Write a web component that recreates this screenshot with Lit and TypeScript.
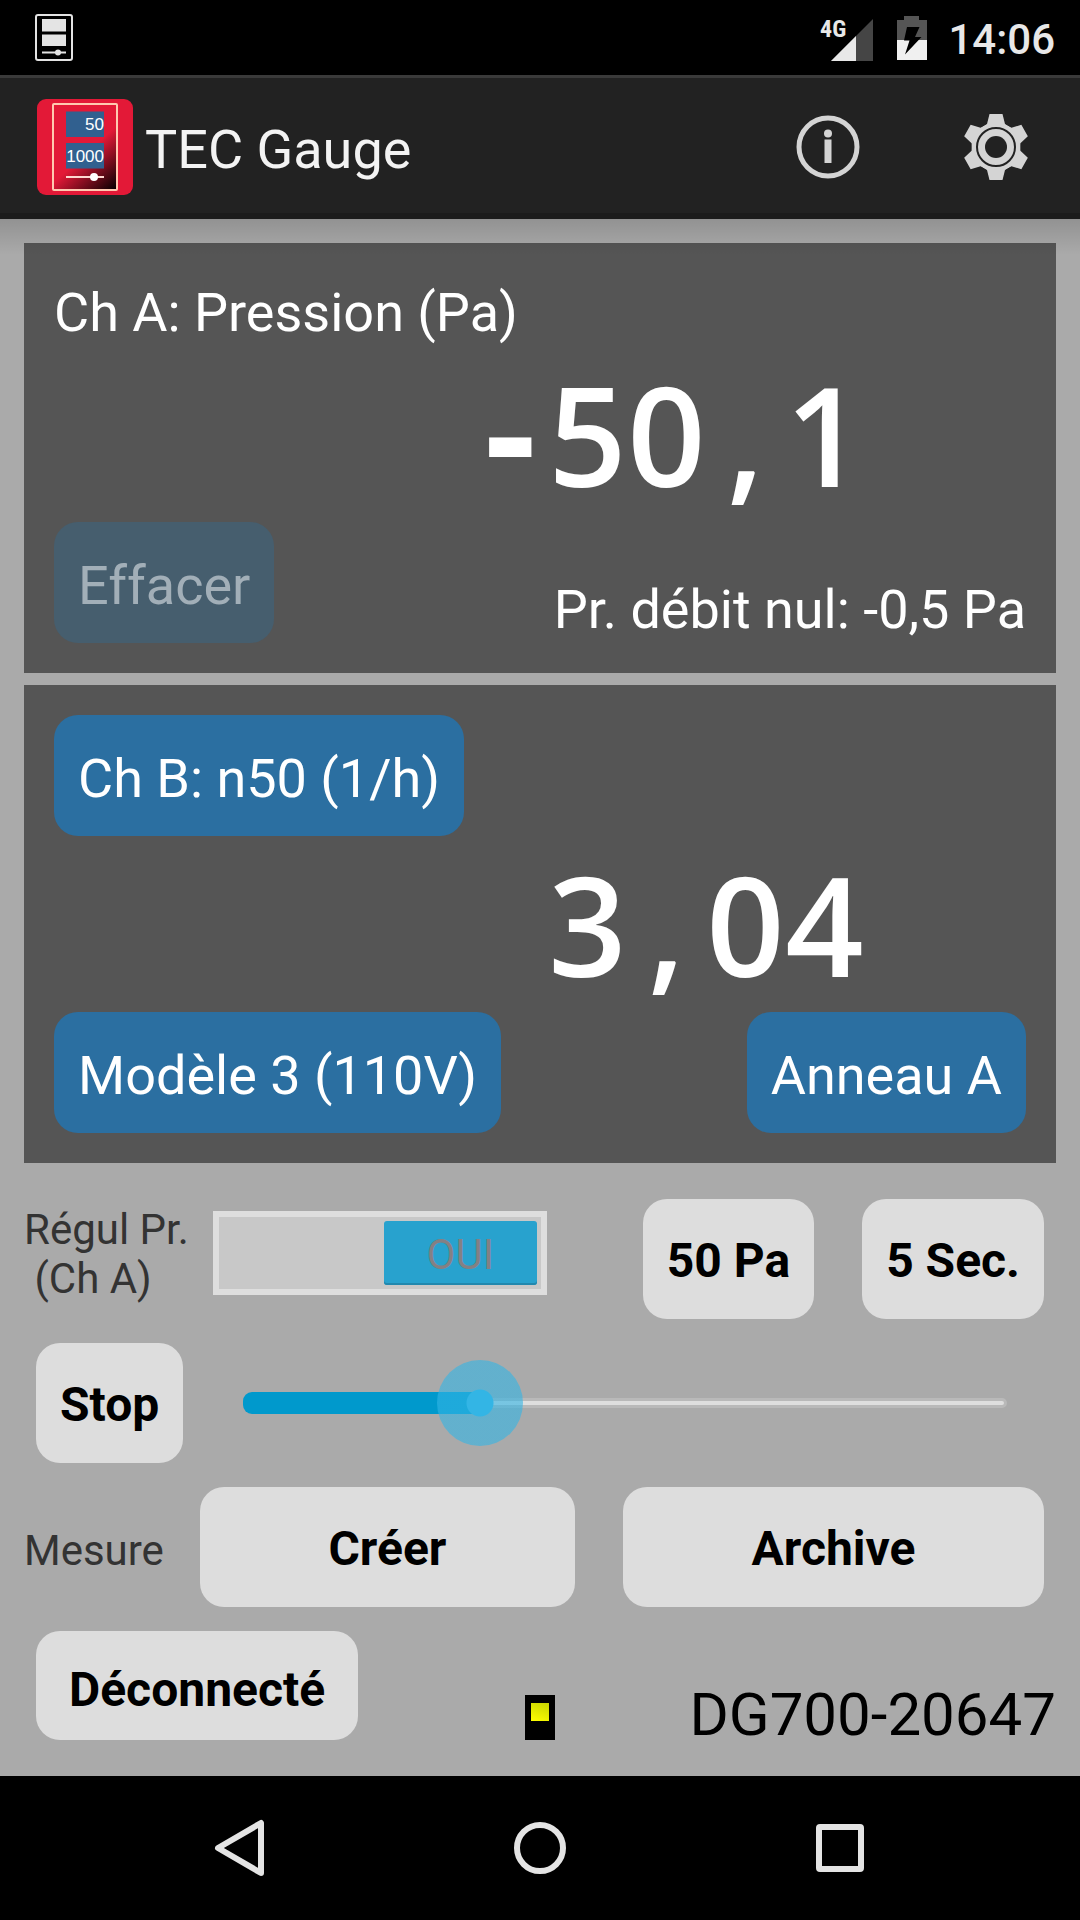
import { LitElement, html, css, svg } from "lit";
import { customElement, property, state } from "lit/decorators.js";

const toothAngles = [0, 60, 120, 180, 240, 300];

@customElement("gauge-readout")
class GaugeReadout extends LitElement {
  @property() value = "";

  static styles = css`
    :host {
      display: flex;
      justify-content: flex-end;
      padding-right: 162px;
      color: #fff;
      font: 600 137px/140px "Open Sans", "Noto Sans", sans-serif;
    }
    .cell {
      width: 79px;
      text-align: center;
    }
    .sign {
      font-family: "DejaVu Sans Mono", monospace;
      font-weight: 700;
      line-height: 0;
    }
  `;

  render() {
    return html`${[...this.value].map(
      (c) => html`<span class="cell">${c === "-" ? html`<span class="sign">-</span>` : c}</span>`
    )}`;
  }
}

@customElement("app-root")
class AppRoot extends LitElement {
  @state() private level = 31;
  @state() private regulating = true;

  static styles = css`
    :host {
      display: flex;
      flex-direction: column;
      min-height: 100vh;
      background: #aaa;
      color: #000;
      font-family: Roboto, sans-serif;
    }
    * {
      box-sizing: border-box;
    }
    svg {
      display: block;
      flex: none;
    }
    button {
      margin: 0;
      border: 0;
      font-family: inherit;
      cursor: pointer;
    }

    .status {
      display: flex;
      align-items: center;
      height: 75px;
      padding: 0 25px 0 35px;
      background: #000;
      color: #e8e8e8;
    }
    .signal {
      margin-left: auto;
    }
    .network {
      font: 700 24px "Liberation Sans Narrow", "Roboto Condensed", Roboto, sans-serif;
    }
    .battery {
      margin-left: 24px;
    }
    .clock {
      margin-left: 21px;
      padding-top: 4px;
      font-size: 42px;
      font-weight: 500;
      line-height: 48px;
    }

    .bar {
      position: relative;
      z-index: 1;
      display: flex;
      align-items: center;
      height: 144px;
      padding: 2px 48px 0 37px;
      border-top: 3px solid #3a3a3a;
      border-bottom: 6px solid #1c1c1c;
      background: #222;
      color: #f3f3f3;
    }
    .bar::after {
      content: "";
      position: absolute;
      left: 0;
      right: 0;
      top: 141px;
      height: 36px;
      background: linear-gradient(rgba(0, 0, 0, 0.14), rgba(0, 0, 0, 0));
      pointer-events: none;
    }
    .name {
      margin: 0 auto 0 12px;
      padding-top: 6px;
      font-size: 54px;
      font-weight: 400;
      line-height: 64px;
    }
    .action {
      padding: 0;
      background: none;
    }
    .action + .action {
      margin-left: 92px;
    }

    main {
      flex: 1;
      display: flex;
      flex-direction: column;
      gap: 24px;
      padding: 24px 24px 36px;
    }
    .panels {
      display: flex;
      flex-direction: column;
      gap: 12px;
      margin-bottom: 12px;
    }
    .panel {
      padding: 30px;
      background: #555;
      color: #fff;
      font-size: 54px;
      line-height: 64px;
    }
    .title {
      margin: 0 0 11px;
      font-size: 54px;
      font-weight: 400;
      line-height: 80px;
    }
    .pick {
      padding: 32px 24px 25px;
      border-radius: 24px;
      background: #2b6fa1;
      color: #fff;
      font-size: 54px;
      line-height: 64px;
    }
    .pick:disabled {
      background: #465e6e;
      color: #a2afb8;
    }
    .pick.head {
      display: block;
      margin-bottom: 18px;
    }
    .foot {
      display: flex;
      justify-content: space-between;
      align-items: flex-end;
      margin-top: 18px;
    }
    .zero {
      line-height: 66px;
    }

    .row {
      display: flex;
      align-items: flex-start;
      padding: 0 12px 0 0;
    }
    .label {
      color: #333;
      font-size: 42px;
      line-height: 49px;
    }
    .regul {
      padding-top: 6px;
      white-space: pre;
    }
    .mesure {
      align-self: center;
      padding-top: 6px;
    }
    .key {
      padding: 34px 24px 30px;
      border-radius: 24px;
      background: #ddd;
      color: #000;
      font-size: 48px;
      font-weight: 700;
      line-height: 56px;
    }
    .key + .key {
      margin-left: 48px;
    }
    .push {
      margin-left: auto;
    }
    .indent {
      margin-left: 12px;
    }
    .grow {
      flex: 1 1 auto;
    }
    .mesure + .grow {
      margin-left: 36px;
    }
    .key.low {
      justify-self: start;
      padding: 31px 33px 22px;
    }

    .switch {
      display: flex;
      justify-content: flex-end;
      width: 334px;
      height: 84px;
      margin: 12px 0 0 24px;
      padding: 4px;
      border: 6px solid #dedede;
      background: #c8c8c8;
    }
    .switch.off {
      justify-content: flex-start;
    }
    .thumb {
      width: 153px;
      height: 64px;
      border-radius: 3px;
      background: #28a2ce;
      box-shadow: inset 0 -2px #2288ae;
      color: #848084;
      font-size: 42px;
      line-height: 68px;
      text-align: center;
    }

    .seek {
      position: relative;
      flex: 1;
      display: flex;
      align-items: center;
      height: 120px;
      margin-left: 60px;
      padding: 0 37px 0 0;
    }
    .rail {
      position: relative;
      flex: 1;
      height: 10px;
      border: 3px solid #b9b9b9;
      border-radius: 5px;
      background: #dedede;
    }
    .fill {
      position: absolute;
      left: -3px;
      top: -9px;
      height: 22px;
      border-radius: 9px 0 0 9px;
      background: #09c;
    }
    .range {
      position: absolute;
      left: -43px;
      right: -6px;
      top: 17px;
      height: 86px;
      margin: 0;
      background: none;
      appearance: none;
      -webkit-appearance: none;
    }
    .range::-webkit-slider-thumb {
      -webkit-appearance: none;
      width: 86px;
      height: 86px;
      border-radius: 50%;
      background: radial-gradient(circle, #33b5e5 13px, rgba(51, 181, 229, 0.6) 14px);
    }

    .link {
      display: grid;
      grid-template-columns: 1fr auto 1fr;
      align-items: end;
    }
    .led {
      width: 30px;
      height: 45px;
      padding: 8px 6px;
      background: #000;
    }
    .lamp {
      height: 18px;
      background: linear-gradient(20deg, #ffff00, #c8d400);
    }
    .device {
      justify-self: end;
      padding-top: 2px;
      font-size: 60px;
      line-height: 50px;
    }

    .nav {
      display: flex;
      justify-content: center;
      align-items: center;
      gap: 234px;
      height: 144px;
      background: #000;
    }
    .nav button {
      padding: 0;
      background: none;
    }
  `;

  private onSeek(e: Event) {
    this.level = Number((e.target as HTMLInputElement).value);
  }

  private appIcon() {
    return html`<svg width="96" height="96" viewBox="0 0 96 96" role="img" aria-label="TEC Gauge">
      <defs>
        <linearGradient id="g" x1="0.35" y1="0.1" x2="0.95" y2="1">
          <stop offset="0.45" stop-color="#e31937" />
          <stop offset="1" stop-color="#0a0002" />
        </linearGradient>
      </defs>
      <rect width="96" height="96" rx="9" fill="#e31937" />
      <rect x="16" y="5" width="64" height="86" rx="1" fill="url(#g)" stroke="#ffc9b0" stroke-width="2" />
      <rect x="29" y="12.500" width="38" height="25.500" fill="#31608f" />
      <rect x="29" y="44" width="38" height="25.500" fill="#31608f" />
      <g fill="#fff" font-family="Liberation Sans, sans-serif" font-size="17" text-anchor="end">
        <text x="67" y="31">50</text>
        <text x="67" y="63">1000</text>
      </g>
      <path d="M29 78h38" stroke="#ffd8d0" stroke-width="2" />
      <circle cx="57" cy="78" r="4" fill="#fff" />
    </svg>`;
  }

  render() {
    return html`
      <div class="status">
        <svg width="38" height="47" viewBox="0 0 38 47" aria-hidden="true">
          <rect x="1" y="1" width="36" height="45" rx="2" fill="none" stroke="#e4e4e4" stroke-width="2" />
          <path d="M7 5h24v12.500H7zM7 20.500h24V32H7zM7 37.500h24v2H7z" fill="#e4e4e4" />
          <circle cx="23" cy="38.500" r="3" fill="#e4e4e4" />
        </svg>
        <svg class="signal" width="60" height="48" viewBox="-6 -4 60 48" role="img" aria-label="4G">
          <path d="M54 1v42H12z" fill="#454545" />
          <path d="M37 18v25H12z" fill="#e8e8e8" />
          <text class="network" x="1" y="19" fill="#e8e8e8">4G</text>
        </svg>
        <svg class="battery" width="30" height="46" viewBox="0 -1 30 46" aria-hidden="true">
          <path d="M7 0h15v4h8v20H0V4h7z" fill="#555" />
          <path d="M0 24h30v20H0z" fill="#f0f0f0" />
          <path d="M10 11h12.500l-4.500 10h6.500L8 38.500l4.500-14H7z" fill="#000" />
        </svg>
        <span class="clock">14:06</span>
      </div>

      <header class="bar">
        ${this.appIcon()}
        <h1 class="name">TEC Gauge</h1>
        <button class="action" aria-label="Informations">
          <svg width="80" height="80" viewBox="-40 -40 80 80" fill="#d4d4d4">
            <circle r="29" fill="none" stroke="#d4d4d4" stroke-width="5" />
            <circle cy="-13.500" r="4" />
            <path d="M-3.500-7.500h7v23.500h-7z" />
          </svg>
        </button>
        <button class="action" aria-label="Paramètres">
          <svg width="72" height="80" viewBox="-36 -40 72 80" fill="#d4d4d4">
            <circle r="24" />
            ${toothAngles.map(
              (a) => svg`<path transform="rotate(${a})" d="M-6.500-33h13l2.500 10 6 4h-30l6-4z" />`
            )}
            <circle r="19" fill="none" stroke="#222" stroke-width="2" />
            <circle r="11" fill="#222" />
          </svg>
        </button>
      </header>

      <main>
        <div class="panels">
          <section class="panel">
            <h2 class="title">Ch A: Pression (Pa)</h2>
            <gauge-readout value="-50,1"></gauge-readout>
            <div class="foot">
              <button class="pick" disabled>Effacer</button>
              <span class="zero">Pr. débit nul: -0,5 Pa</span>
            </div>
          </section>
          <section class="panel">
            <button class="pick head">Ch B: n50 (1/h)</button>
            <gauge-readout value="3,04"></gauge-readout>
            <div class="foot">
              <button class="pick">Modèle 3 (110V)</button>
              <button class="pick">Anneau A</button>
            </div>
          </section>
        </div>

        <div class="row">
          <span class="label regul" id="regul">Régul Pr.\n (Ch A)</span>
          <button
            class="switch ${this.regulating ? "" : "off"}"
            role="switch"
            aria-checked=${this.regulating ? "true" : "false"}
            aria-labelledby="regul"
            @click=${() => (this.regulating = !this.regulating)}
          >
            <span class="thumb">${this.regulating ? "OUI" : "NON"}</span>
          </button>
          <button class="key push">50 Pa</button>
          <button class="key">5 Sec.</button>
        </div>

        <div class="row">
          <button class="key indent">Stop</button>
          <div class="seek">
            <div class="rail"><div class="fill" style="width:${this.level}%"></div></div>
            <input
              class="range"
              type="range"
              min="0"
              max="100"
              aria-label="Vitesse"
              .value=${String(this.level)}
              @input=${this.onSeek}
            />
          </div>
        </div>

        <div class="row">
          <span class="label mesure">Mesure</span>
          <button class="key grow">Créer</button>
          <button class="key grow">Archive</button>
        </div>

        <div class="link">
          <button class="key low indent">Déconnecté</button>
          <div class="led"><div class="lamp"></div></div>
          <span class="device">DG700-20647</span>
        </div>
      </main>

      <nav class="nav">
        <button aria-label="Retour">
          <svg width="66" height="66" viewBox="0 0 66 66" fill="none" stroke="#e4e4e4" stroke-width="6" stroke-linejoin="round">
            <path d="M54 8v50L11 33z" />
          </svg>
        </button>
        <button aria-label="Accueil">
          <svg width="66" height="66" viewBox="0 0 66 66" fill="none" stroke="#e4e4e4" stroke-width="6">
            <circle cx="33" cy="33" r="23" />
          </svg>
        </button>
        <button aria-label="Applications récentes">
          <svg width="66" height="66" viewBox="0 0 66 66" fill="none" stroke="#e4e4e4" stroke-width="6">
            <rect x="12" y="12" width="42" height="42" rx="1" />
          </svg>
        </button>
      </nav>
    `;
  }
}
